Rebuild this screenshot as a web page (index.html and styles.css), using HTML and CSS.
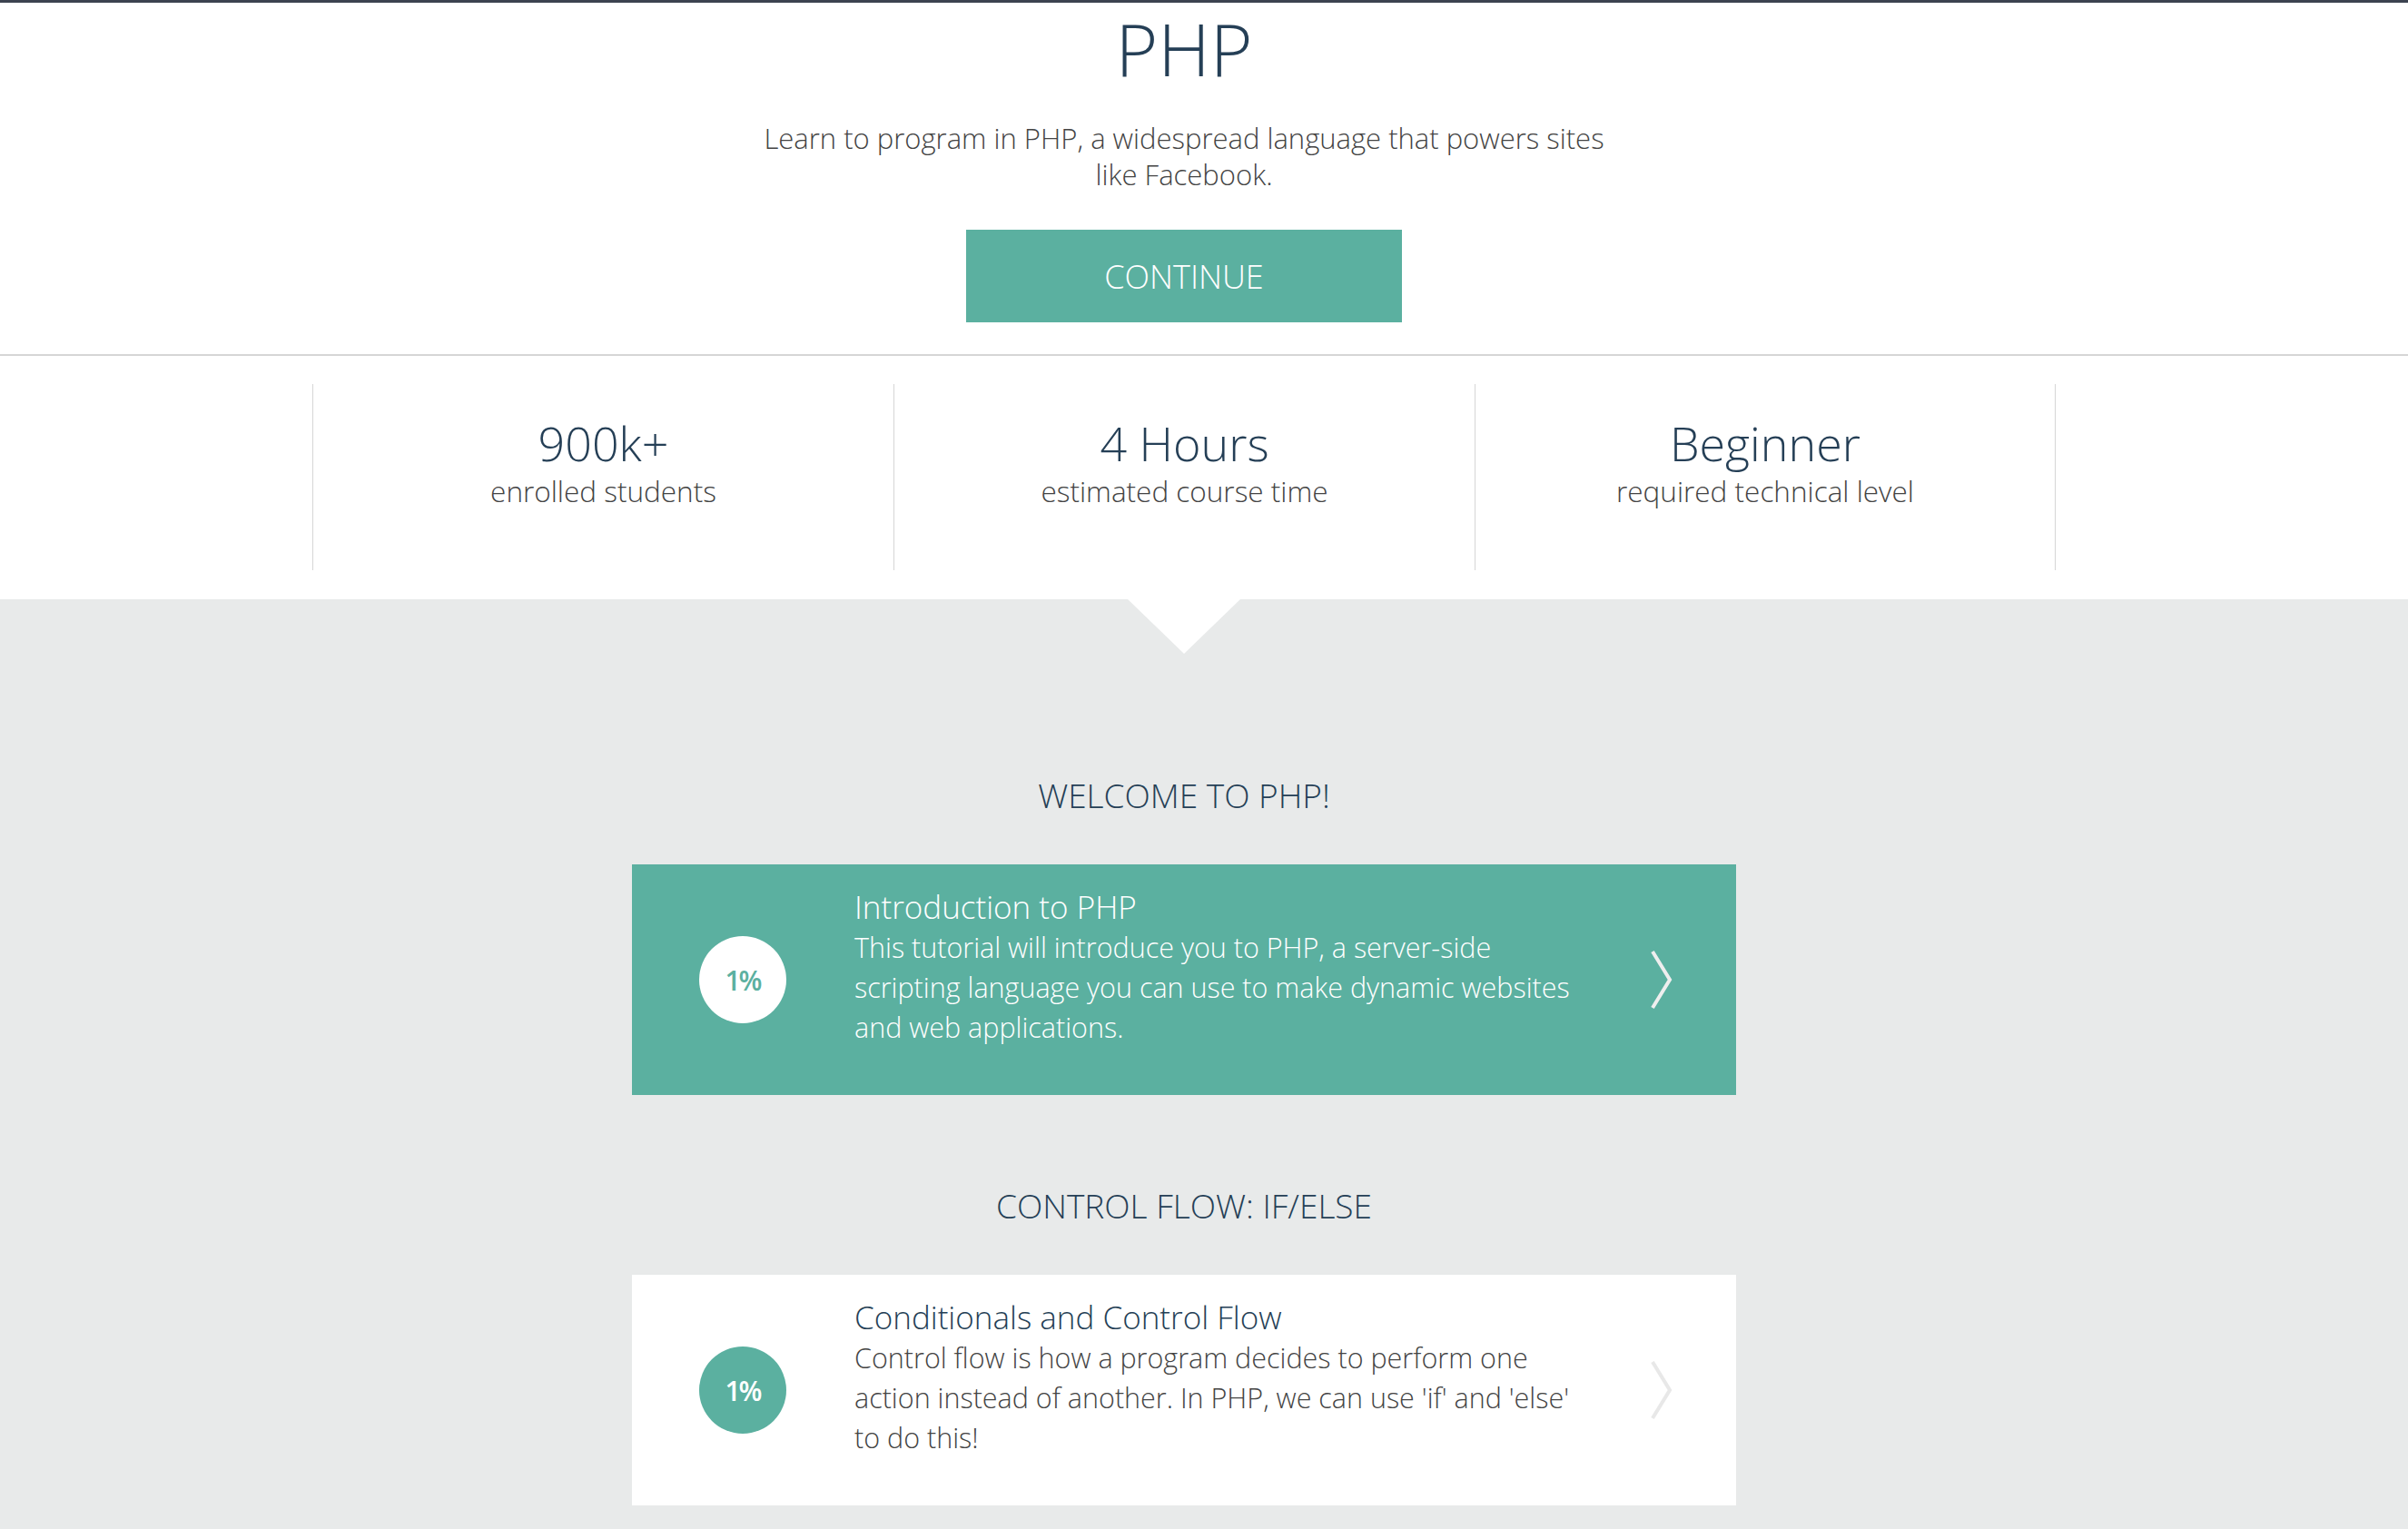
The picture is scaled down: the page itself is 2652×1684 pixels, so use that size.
FILE: index.html
```html
<!DOCTYPE html>
<html lang="en">
<head>
<meta charset="utf-8">
<title>PHP</title>
<link rel="stylesheet" href="styles.css">
</head>
<body>
<header class="hero">
  <h1 class="hero-title">PHP</h1>
  <p class="hero-desc">Learn to program in PHP, a widespread language that powers sites like Facebook.</p>
  <a class="btn" href="#">CONTINUE</a>
</header>

<section class="stats">
  <div class="stats-row">
    <div class="stat">
      <div class="stat-num">900k+</div>
      <div class="stat-label">enrolled students</div>
    </div>
    <div class="stat">
      <div class="stat-num">4 Hours</div>
      <div class="stat-label">estimated course time</div>
    </div>
    <div class="stat stat-last">
      <div class="stat-num">Beginner</div>
      <div class="stat-label">required technical level</div>
    </div>
  </div>
</section>

<main class="lessons">
  <div class="notch"></div>

  <h2 class="unit-title">WELCOME TO PHP!</h2>
  <a class="card card-active" href="#">
    <div class="badge">1%</div>
    <div class="card-text">
      <div class="card-title">Introduction to PHP</div>
      <div class="card-desc">This tutorial will introduce you to PHP, a server-side scripting language you can use to make dynamic websites and web applications.</div>
    </div>
    <svg class="chev" width="28" height="66" viewBox="0 0 28 66"><path d="M4 2 L23 33 L4 64" fill="none" stroke-width="4"/></svg>
  </a>

  <h2 class="unit-title unit-title-next">CONTROL FLOW: IF/ELSE</h2>
  <a class="card" href="#">
    <div class="badge">1%</div>
    <div class="card-text">
      <div class="card-title">Conditionals and Control Flow</div>
      <div class="card-desc">Control flow is how a program decides to perform one action instead of another. In PHP, we can use 'if' and 'else' to do this!</div>
    </div>
    <svg class="chev" width="28" height="66" viewBox="0 0 28 66"><path d="M4 2 L23 33 L4 64" fill="none" stroke-width="4"/></svg>
  </a>
</main>
</body>
</html>
```

FILE: styles.css
```css
html, body {
  margin: 0;
  padding: 0;
}

body {
  font-family: "Open Sans", "Noto Sans", sans-serif;
  font-weight: 300;
  background: #e8eaea;
  color: #444444;
}

.hero {
  background: #ffffff;
  border-top: 3px solid #3c4350;
  border-bottom: 2px solid #d6d6d6;
  padding: 10px 44px 35px 0;
  display: flex;
  flex-direction: column;
  align-items: center;
}

.hero-title {
  margin: 0;
  font-size: 80px;
  line-height: 80px;
  font-weight: 300;
  color: #253f56;
}

.hero-desc {
  margin: 39px 0 0;
  max-width: 940px;
  font-size: 31px;
  line-height: 40px;
  text-align: center;
  color: #444444;
}

.btn {
  margin-top: 41px;
  width: 480px;
  height: 102px;
  background: #5bb0a0;
  color: #ffffff;
  text-decoration: none;
  font-size: 36px;
  display: flex;
  align-items: center;
  justify-content: center;
}

.stats {
  background: #ffffff;
  padding: 31px 44px 32px 0;
}

.stats-row {
  display: grid;
  grid-template-columns: repeat(3, 640px);
  justify-content: center;
}

.stat {
  border-left: 1px solid #d6d6d6;
  height: 205px;
  padding-top: 35px;
  box-sizing: border-box;
  text-align: center;
}

.stat-last {
  border-right: 1px solid #d6d6d6;
}

.stat-num {
  font-size: 52px;
  line-height: 60px;
  color: #253f56;
}

.stat-label {
  margin-top: 3px;
  font-size: 31.5px;
  line-height: 40px;
  color: #444444;
}

.lessons {
  position: relative;
  padding: 191px 44px 27px 0;
  display: flex;
  flex-direction: column;
  align-items: center;
}

.notch {
  position: absolute;
  top: 0;
  left: calc(50% - 22px - 62px);
  width: 0;
  height: 0;
  border-left: 62px solid transparent;
  border-right: 62px solid transparent;
  border-top: 60px solid #ffffff;
}

.unit-title {
  margin: 0;
  font-size: 37px;
  line-height: 50px;
  font-weight: 300;
  color: #253f56;
}

.unit-title-next {
  margin-top: 97px;
}

.card {
  margin-top: 51px;
  width: 1216px;
  height: 254px;
  box-sizing: border-box;
  background: #ffffff;
  display: flex;
  align-items: center;
  padding: 0 68px 0 74px;
  text-decoration: none;
}

.badge {
  flex: none;
  width: 96px;
  height: 96px;
  border-radius: 50%;
  background: #5bb0a0;
  color: #ffffff;
  font-weight: 600;
  font-size: 30px;
  letter-spacing: -2px;
  display: flex;
  align-items: center;
  justify-content: center;
}

.card-text {
  margin-left: 75px;
  margin-bottom: 29px;
  width: 820px;
}

.card-title {
  font-size: 35px;
  line-height: 44px;
  color: #253f56;
}

.card-desc {
  font-size: 30.5px;
  line-height: 44px;
  color: #444444;
}

.chev {
  margin-left: auto;
  stroke: #e8e8e8;
}

.card-active {
  background: #5bb0a0;
}

.card-active .badge {
  background: #ffffff;
  color: #5bb0a0;
}

.card-active .card-title,
.card-active .card-desc {
  color: #ffffff;
}

.card-active .chev {
  stroke: #eeeeee;
}
```
